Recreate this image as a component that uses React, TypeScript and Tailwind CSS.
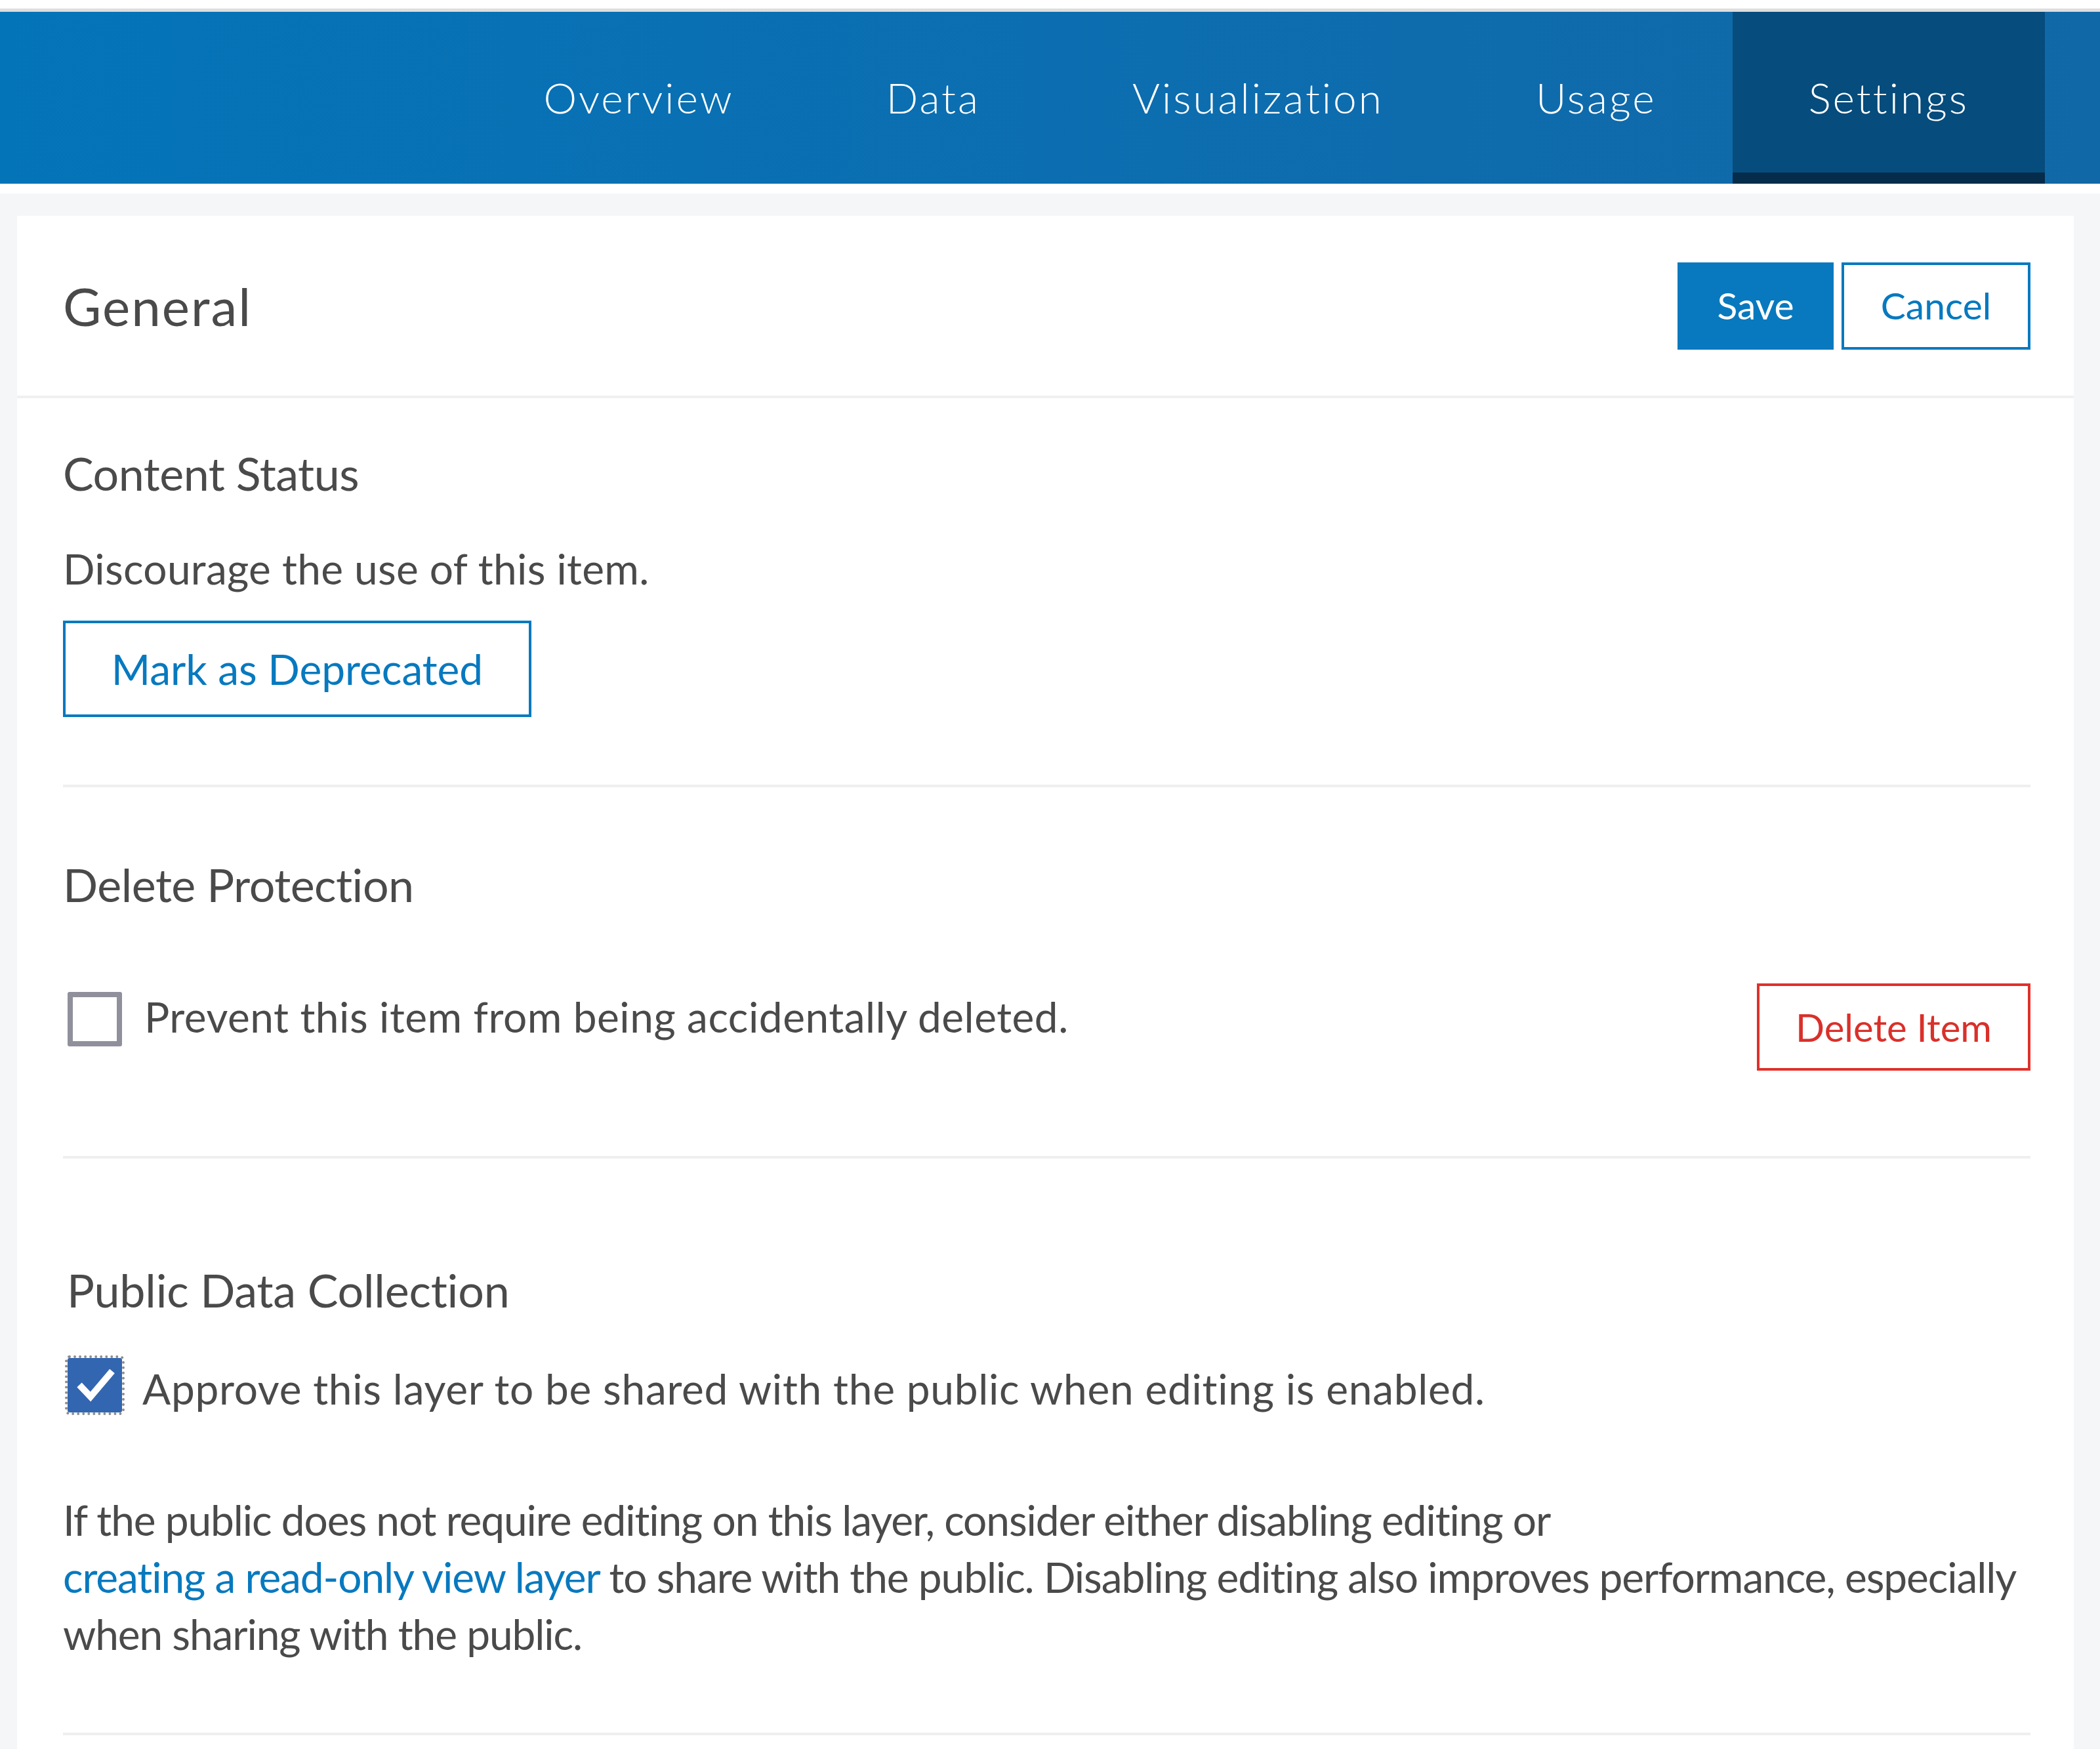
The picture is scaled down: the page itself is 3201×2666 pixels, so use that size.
import React from "react";

const tabs = ["Overview", "Data", "Visualization", "Usage", "Settings"];

const Divider = () => <div className="h-[4px] bg-[#efefef]" />;

const App = () => {
  return (
    <div className="min-h-screen bg-white font-['Lato',sans-serif] text-[#4a4a4a]">
      {/* top strip */}
      <div className="h-[13px] bg-white" />
      <div className="h-[5px] bg-[#dedede]" />

      {/* item tabs */}
      <nav className="flex h-[262px] justify-end bg-linear-to-r from-[#0474b9] to-[#1168a7] pr-[84px]">
        {tabs.map((t) => (
          <a
            key={t}
            href="#"
            className={
              t === "Settings"
                ? "flex h-full items-center bg-[#064c7c] px-[116px] text-[64px] font-light tracking-[3px] text-white shadow-[inset_0_-17px_0_#052c4a]"
                : "flex h-full items-center px-[116px] text-[64px] font-light tracking-[3px] text-white"
            }
          >
            {t}
          </a>
        ))}
      </nav>

      <div className="h-[15px] bg-white" />

      <div className="bg-[#f5f6f8] pl-[26px] pr-[40px] pt-[34px]">
        <div className="bg-white">
          {/* header */}
          <div className="flex h-[278px] items-center justify-between border-b-4 border-[#f0f0f0] pl-[70px] pr-[66px]">
            <h2 className="text-[80px] leading-[96px] tracking-[2px]">General</h2>
            <div className="flex gap-[12px]">
              <button className="flex h-[133px] w-[238px] items-center justify-center bg-[#0879be] text-[57px] text-white">
                Save
              </button>
              <button className="flex h-[133px] w-[288px] items-center justify-center border-4 border-[#0779bf] text-[57px] text-[#0779bf]">
                Cancel
              </button>
            </div>
          </div>

          <div className="pl-[70px] pr-[66px]">
            {/* content status */}
            <h3 className="mt-[72px] text-[70px] leading-[84px] tracking-[-0.5px]">Content Status</h3>
            <p className="mt-[65px] text-[64px] leading-[77px] tracking-[0.3px]">Discourage the use of this item.</p>
            <button className="mt-[41px] flex h-[147px] w-[714px] items-center justify-center border-4 border-[#0779bf] text-[64px] text-[#0779bf]">
              Mark as Deprecated
            </button>
            <div className="mt-[103px]">
              <Divider />
            </div>

            {/* delete protection */}
            <h3 className="mt-[106px] text-[70px] leading-[84px] tracking-[-0.5px]">Delete Protection</h3>
            <div className="mt-[109px] flex items-start justify-between">
              <label className="mt-[13px] flex items-start">
                <span className="ml-[7px] h-[83px] w-[83px] shrink-0 rounded-[3px] border-[8px] border-[#8f909b] bg-white" />
                <span className="-mt-[1px] ml-[34px] text-[64px] leading-[77px] tracking-[0.5px]">
                  Prevent this item from being accidentally deleted.
                </span>
              </label>
              <button className="flex h-[133px] w-[417px] items-center justify-center border-4 border-[#e0302a] text-[58px] text-[#d9302a]">
                Delete Item
              </button>
            </div>
            <div className="mt-[130px]">
              <Divider />
            </div>

            {/* public data collection */}
            <h3 className="ml-[6px] mt-[158px] text-[70px] leading-[84px] tracking-[-0.2px]">Public Data Collection</h3>
            <label className="mt-[62px] flex items-start">
              <span className="ml-[7px] flex h-[83px] w-[83px] shrink-0 items-center justify-center rounded-[3px] bg-[#3366b0] outline-4 outline-dotted outline-[#8c8c8c]">
                <svg width="83" height="83" viewBox="0 0 83 83">
                  <polyline
                    points="18,41 35,59 68,20"
                    fill="none"
                    stroke="#ffffff"
                    strokeWidth="10"
                    strokeLinejoin="miter"
                  />
                </svg>
              </span>
              <span className="ml-[31px] mt-[8px] text-[64px] leading-[77px] tracking-[0.7px]">
                Approve this layer to be shared with the public when editing is enabled.
              </span>
            </label>

            <p className="mt-[118px] text-[64px] leading-[87px] tracking-[-1.1px]">
              <span className="block whitespace-nowrap">
                If the public does not require editing on this layer, consider either disabling editing or
              </span>
              <span className="block whitespace-nowrap">
                <a href="#" className="text-[#0779bf]">
                  creating a read-only view layer
                </a>{" "}
                to share with the public. Disabling editing also improves performance, especially
              </span>
              <span className="block whitespace-nowrap">when sharing with the public.</span>
            </p>
            <div className="mt-[107px] pb-[40px]">
              <Divider />
            </div>
          </div>
        </div>
      </div>
    </div>
  );
};

export default App;
